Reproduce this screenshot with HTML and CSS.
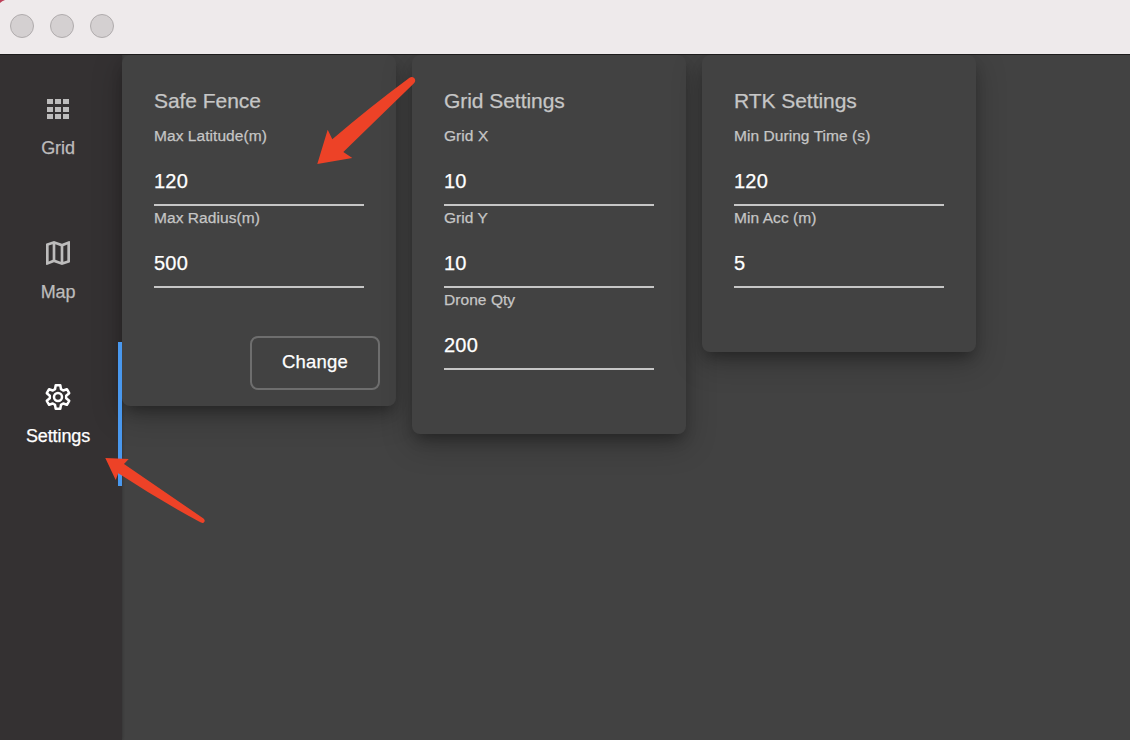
FILE: index.html
```html
<!DOCTYPE html>
<html lang="en">
<head>
<meta charset="utf-8">
<title>Settings</title>
<link rel="stylesheet" href="styles.css">
</head>
<body>
<div class="window">
  <header class="titlebar">
    <svg class="corner" width="5" height="3" viewBox="0 0 5 3"><path d="M0 0H5Q2 .8 0 3Z" fill="#bd4058"/></svg>
    <span class="light"></span><span class="light"></span><span class="light"></span>
  </header>
  <div class="body">
    <nav class="sidebar">
      <a class="item">
        <svg class="icon" viewBox="0 0 32 32" shape-rendering="crispEdges"><path d="M5 6h6v5H5zM13 6h6v5h-6zM21 6h6v5h-6zM5 14h6v5H5zM13 14h6v5h-6zM21 14h6v5h-6zM5 21h6v5H5zM13 21h6v5h-6zM21 21h6v5h-6z"/></svg>
        <span>Grid</span>
      </a>
      <a class="item">
        <svg class="icon" viewBox="0 0 24 24"><path d="M20.5 3l-.16.03L15 5.1 9 3 3.36 4.9c-.21.07-.36.25-.36.48V20.500c0 .28.22.5.5.5l.16-.03L9 18.900l6 2.100 5.640-1.900c.21-.07.36-.25.36-.48V3.500c0-.28-.22-.5-.5-.5zM10 5.470l4 1.400v11.660l-4-1.400V5.470zm-5 .990l3-1.010v11.700l-3 1.160V6.460zm14 11.080l-3 1.010V6.860l3-1.160v11.840z"/></svg>
        <span>Map</span>
      </a>
      <a class="item active">
        <svg class="icon gear" viewBox="0 0 32 32"><path d="M13.700 4.300h4.600l.7 3.900 2.200 1.300 3.700-1.300 2.300 4-3 2.500v2.600l3 2.500-2.300 4-3.700-1.300-2.200 1.300-.7 3.900h-4.600l-.7-3.900-2.200-1.300-3.700 1.300-2.300-4 3-2.500v-2.600l-3-2.500 2.300-4 3.700 1.300L13 8.200z"/><circle cx="16" cy="16" r="4"/></svg>
        <span>Settings</span>
      </a>
    </nav>
    <main class="content">
      <section class="card">
        <h2 class="title">Safe Fence</h2>
        <label class="label">Max Latitude(m)</label><div class="value">120</div>
        <label class="label">Max Radius(m)</label><div class="value">500</div>
        <button class="change">Change</button>
      </section>
      <section class="card">
        <h2 class="title">Grid Settings</h2>
        <label class="label">Grid X</label><div class="value">10</div>
        <label class="label">Grid Y</label><div class="value">10</div>
        <label class="label">Drone Qty</label><div class="value">200</div>
      </section>
      <section class="card">
        <h2 class="title">RTK Settings</h2>
        <label class="label">Min During Time (s)</label><div class="value">120</div>
        <label class="label">Min Acc (m)</label><div class="value">5</div>
      </section>
    </main>
  </div>
  <svg class="arrows" width="1130" height="740" viewBox="0 0 1130 740">
    <path d="M317.300 164L327.700 129.700L332.300 139.300Q370 107 409.500 77.800Q412 76 414.400 78.200Q416.200 80.500 414 83.200L343.300 152L352.300 158Z"/>
    <path d="M105.300 458L128.700 459L124 464L203.500 518.500Q206 521 203.500 522.800Q202 523.500 199 521.500Q159 500 118.300 473.300L115.700 480Z"/>
  </svg>
</div>
</body>
</html>
```
FILE: styles.css
```css
* { box-sizing: border-box; }
body { margin: 0; font-family: "Liberation Sans", Arial, sans-serif; }
.window { position: relative; width: 1130px; height: 740px; overflow: hidden; display: flex; flex-direction: column; background: #424242; -webkit-text-stroke: .25px currentColor; }
.titlebar { position: relative; height: 54px; flex: none; display: flex; gap: 16px; padding: 14px 10px; background: #eeeaeb; }
.corner { position: absolute; left: 0; top: 0; }
.light { width: 24px; height: 24px; border-radius: 50%; background: #d4d0d1; border: 1px solid #b0acad; }
.body { position: relative; flex: 1; display: flex; overflow: hidden; border-top: 1px solid #1d1c1c; }
.sidebar { width: 122px; flex: none; background: #343132; box-shadow: 0 0 3px rgba(0,0,0,.3); }
.item { height: 144px; padding: 39px 2px 0 0; display: flex; flex-direction: column; align-items: center; gap: 13px; border-right: 4px solid transparent; color: #bdbcbc; font-size: 18px; line-height: 20px; letter-spacing: -.1px; }
.item:first-child { height: 143px; padding-top: 38px; }
.item.active { position: relative; z-index: 1; color: #fff; border-right-color: #4998ee; }
.icon { width: 32px; height: 32px; fill: currentColor; }
.gear { fill: none; stroke: currentColor; stroke-width: 2.5; stroke-linejoin: round; }
.content { flex: 1; display: flex; align-items: flex-start; gap: 16px; }
.card { width: 274px; padding: 31px 32px 64px; display: flex; flex-direction: column; background: #424242; border-radius: 8px; box-shadow: 0 8px 14px -4px rgba(0,0,0,.3), 0 10px 30px rgba(0,0,0,.25); }
.card:has(.change) { padding-bottom: 16px; }
.title { margin: 0 0 6px; height: 29px; font-size: 21px; line-height: 29px; font-weight: 400; color: #c6c6c6; letter-spacing: -.05px; }
.label { height: 31px; font-size: 15.5px; line-height: 30px; color: #c6c6c6; letter-spacing: .06px; }
.value { height: 54px; border-bottom: 2px solid #c6c6c6; font-size: 20px; line-height: 58px; color: #fff; letter-spacing: .2px; }
.value + .label { height: 28px; line-height: 24px; }
.change { width: 130px; height: 54px; margin: 48px -16px 0 0; align-self: flex-end; background: transparent; border: 2px solid #6e6e6e; border-radius: 8px; color: #fff; font: 18.5px/48px "Liberation Sans", Arial, sans-serif; padding: 0 0 2px; letter-spacing: .2px; -webkit-text-stroke: inherit; }
.arrows { position: absolute; left: 0; top: 0; z-index: 2; fill: #ed4227; pointer-events: none; }
```
